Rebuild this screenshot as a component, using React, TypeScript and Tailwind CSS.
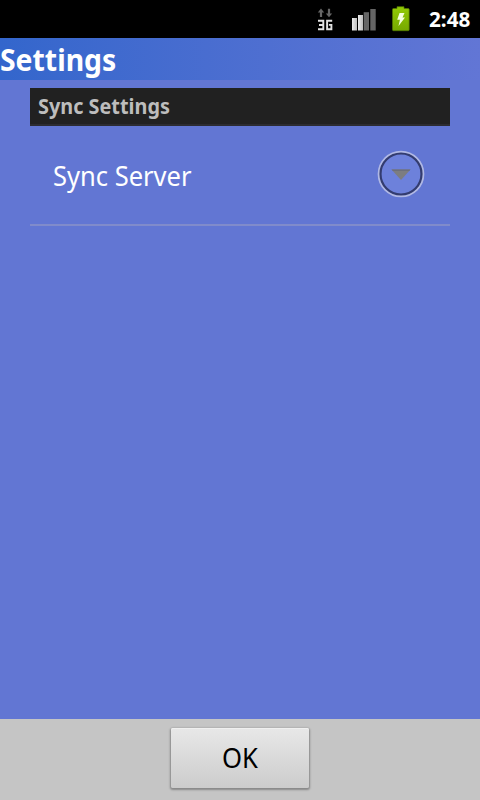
function StatusBar() {
  return (
    <div className="flex h-[38px] shrink-0 items-center bg-black pl-[316px]">
      <svg className="h-[38px] w-[18px] shrink-0" viewBox="0 0 18 38">
        <g fill="#666666">
          <path d="M5 8.5l3.2 3.9H6.1V17H3.9v-4.6H1.8z" />
          <path d="M13 17.3l-3.2-3.9h2.1V8.8h2.2v4.6h2.1z" />
        </g>
        <g fill="none" stroke="#e2e2e2" strokeWidth="1.9">
          <path d="M2 20.8h5.3v8.5H2M3 25h4.3" />
          <path d="M16.2 20.8h-5.1v8.5h4.3v-4.4h-2.5" />
        </g>
      </svg>
      <svg className="ml-[17px] h-[38px] w-[26px] shrink-0" viewBox="0 0 26 38">
        <defs>
          <linearGradient id="bar" x1="0" y1="0" x2="1" y2="0">
            <stop offset="0" stopColor="#ececec" />
            <stop offset="1" stopColor="#bdbdbd" />
          </linearGradient>
        </defs>
        <rect x="1" y="18" width="5" height="12.5" fill="url(#bar)" />
        <rect x="7" y="15" width="5" height="15.5" fill="url(#bar)" />
        <rect x="12.7" y="12.2" width="5.3" height="18.3" fill="#656565" />
        <rect x="19.3" y="9" width="5.4" height="21.5" fill="#656565" />
      </svg>
      <svg className="ml-[14px] h-[38px] w-[20px] shrink-0" viewBox="0 0 20 38">
        <defs>
          <linearGradient id="charge" x1="0" y1="0" x2="0" y2="1">
            <stop offset="0" stopColor="#93cb05" />
            <stop offset="1" stopColor="#76a800" />
          </linearGradient>
        </defs>
        <path d="M2.5 8.5H6V6.7h7v1.8h4.2q1 0 1 1v20.2q0 1-1 1H2.5q-1 0-1-1V9.5q0-1 1-1z" fill="url(#charge)" stroke="#557800" strokeWidth=".7" />
        <path d="M8.5 13h5l-2 4.5H14L7.5 26l1.4-6.2H6.2z" fill="#f5ffdf" />
      </svg>
      <span className="ml-[17.5px] inline-block origin-left scale-x-[0.985] text-[21px] font-bold leading-[38px] text-white">2:48</span>
    </div>
  );
}

function Expander() {
  return (
    <svg className="mb-[2px] h-12 w-12 shrink-0" viewBox="0 0 48 48">
      <circle cx="24" cy="24" r="22.2" fill="#6d81db" stroke="#b0b8e4" strokeWidth="2.3" />
      <circle cx="24" cy="24" r="20.5" fill="none" stroke="#333c6f" strokeWidth="2.2" />
      <path d="M14.5 19.5h19L24 30z" fill="#7c7d81" />
      <path d="M14.5 19.5h19l-1.3 1.4H15.8z" fill="#6c6f7c" />
    </svg>
  );
}

export default function App() {
  return (
    <div className="flex h-[800px] w-[480px] flex-col overflow-hidden bg-[#6276d3] font-['Noto_Sans',sans-serif]">
      <StatusBar />
      <header className="h-[42px] shrink-0 bg-linear-to-r from-[#3366cc] to-[#6276d5]">
        <h1 className="inline-block origin-left scale-x-[0.945] text-[30px] font-bold leading-[43px] text-white">Settings</h1>
      </header>
      <main className="flex-1 px-[30px] pt-2">
        <h2 className="h-[38px] border-b-2 border-[#2c2c31] bg-[#212121] pl-2 text-[21px] font-bold leading-[37px] text-[#bdbdbd]">
          <span className="inline-block origin-left scale-x-[0.945]">Sync Settings</span>
        </h2>
        <div className="flex h-[100px] items-center justify-between border-b-2 border-[#808bcb] pl-[23px] pr-[25px]">
          <span className="inline-block origin-left scale-x-[0.945] pt-[2px] text-[27px] leading-[38px] text-white">Sync Server</span>
          <Expander />
        </div>
      </main>
      <footer className="flex h-[81px] shrink-0 justify-center bg-[#c5c5c5] pt-[9px]">
        <button className="h-[60px] w-[138px] rounded-[2px] bg-linear-to-b from-[#e8e8e8] to-[#cccccc] text-[27px] text-black shadow-[0_1px_2px_1px_#888888,inset_0_1px_0_#f0f0f0]">
          <span className="inline-block scale-x-[0.95]">OK</span>
        </button>
      </footer>
    </div>
  );
}
